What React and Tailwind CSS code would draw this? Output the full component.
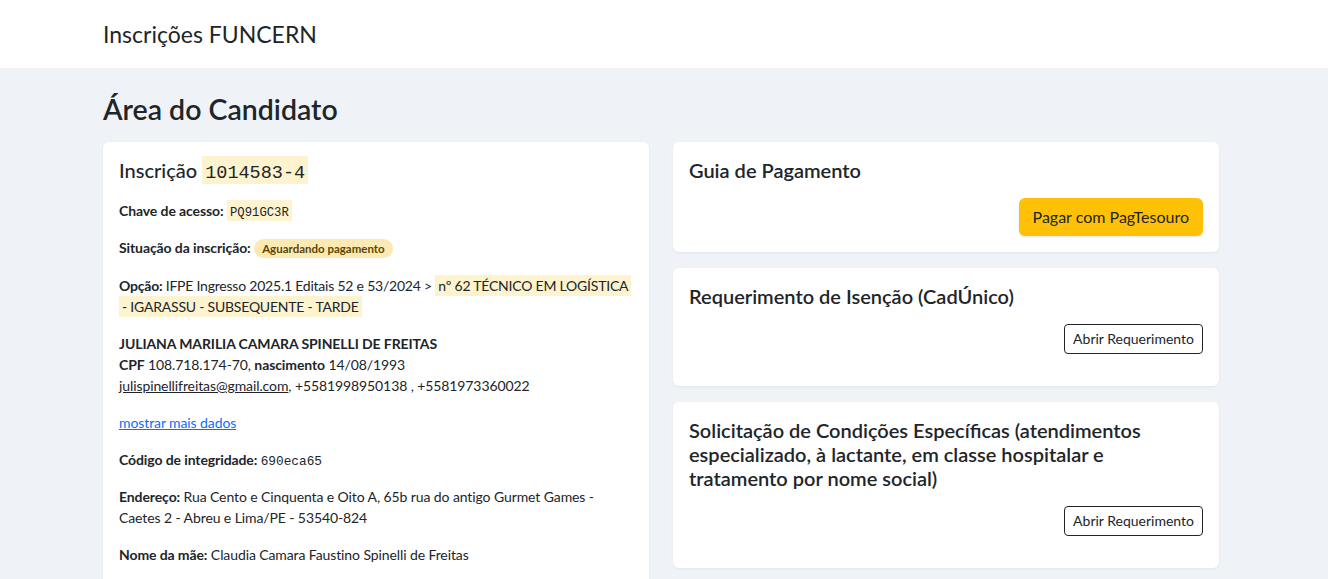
import React from 'react';

const sans = "font-['Lato','Liberation_Sans',sans-serif]";
const mono = "font-['Liberation_Mono',monospace]";

function Mark({ children, className = '' }) {
  return (
    <mark className={`bg-[#fdf3cf] px-[3px] py-[2px] text-[#212529] [box-decoration-break:clone] ${className}`}>
      {children}
    </mark>
  );
}

function Card({ children, className = '' }) {
  return (
    <div className={`rounded-md bg-white p-4 shadow-[0_1px_3px_rgba(0,0,0,0.06)] ${className}`}>
      {children}
    </div>
  );
}

function OutlineButton({ children }) {
  return (
    <button className="rounded border border-[#212529] bg-white px-2 py-1 text-sm leading-[20px] text-[#212529]">
      {children}
    </button>
  );
}

export default function App() {
  return (
    <div className={`${sans} min-h-screen bg-[#eff3f8] text-[#212529]`}>
      <header className="h-[68px] bg-white">
        <div className="ml-[103px] flex h-full items-center">
          <span className="text-[23px] leading-none">Inscrições FUNCERN</span>
        </div>
      </header>

      <main className="ml-[103px] w-[1116px] pt-6">
        <h1 className="mb-4 text-[28.5px] font-semibold leading-[1.2]">Área do Candidato</h1>

        <div className="grid grid-cols-2 gap-6">
          <Card className="text-sm leading-[21px] tracking-[-0.1px]">
            <h2 className="mb-4 text-[20px] font-medium leading-[24px] tracking-normal">
              Inscrição <Mark><code className={`${mono} text-[18.5px] leading-none`}>1014583-4</code></Mark>
            </h2>

            <p className="mb-4">
              <strong>Chave de acesso:</strong>{' '}
              <Mark><code className={`${mono} text-[12.25px] leading-none tracking-normal`}>PQ91GC3R</code></Mark>
            </p>

            <p className="mb-[17px]">
              <strong>Situação da inscrição:</strong>{' '}
              <span className="rounded-full bg-[#fdeab2] px-2 py-[3px] text-[11.5px] font-bold leading-none tracking-normal text-[#5c4503]">
                Aguardando pagamento
              </span>
            </p>

            <p className="mb-4 tracking-[-0.22px]">
              <strong>Opção:</strong> IFPE Ingresso 2025.1 Editais 52 e 53/2024 &gt;{' '}
              <Mark className="py-[1px]">nº 62 TÉCNICO EM LOGÍSTICA - IGARASSU - SUBSEQUENTE - TARDE</Mark>
            </p>

            <p className="mb-4">
              <strong>JULIANA MARILIA CAMARA SPINELLI DE FREITAS</strong>
              <br />
              <strong>CPF</strong> 108.718.174-70, <strong>nascimento</strong> 14/08/1993
              <br />
              <a href="#" className="text-[#212529] underline">julispinellifreitas@gmail.com</a>, +5581998950138 , +5581973360022
            </p>

            <p className="mb-4">
              <a href="#" className="text-[#0d6efd] underline">mostrar mais dados</a>
            </p>

            <p className="mb-4">
              <strong>Código de integridade:</strong>{' '}
              <code className={`${mono} text-[12.75px] leading-none tracking-normal`}>690eca65</code>
            </p>

            <p className="mb-4">
              <strong>Endereço:</strong> Rua Cento e Cinquenta e Oito A, 65b rua do antigo Gurmet Games - Caetes 2 - Abreu e Lima/PE - 53540-824
            </p>

            <p className="mb-4">
              <strong>Nome da mãe:</strong> Claudia Camara Faustino Spinelli de Freitas
            </p>
          </Card>

          <div className="flex flex-col gap-4 self-start">
            <Card>
              <h2 className="mb-4 text-[20px] font-semibold leading-[24px]">Guia de Pagamento</h2>
              <div className="flex justify-end">
                <button className="rounded-md bg-[#ffc107] px-[14px] py-[6px] text-base leading-[26px] text-[#212529] shadow-[0_1px_2px_rgba(0,0,0,0.12)]">
                  Pagar com PagTesouro
                </button>
              </div>
            </Card>

            <Card>
              <h2 className="mb-4 text-[20px] font-semibold leading-[24px]">Requerimento de Isenção (CadÚnico)</h2>
              <div className="mb-4 flex justify-end">
                <OutlineButton>Abrir Requerimento</OutlineButton>
              </div>
            </Card>

            <Card>
              <h2 className="mb-4 text-[20px] font-semibold leading-[24px]">
                Solicitação de Condições Específicas (atendimentos especializado, à lactante, em classe hospitalar e tratamento por nome social)
              </h2>
              <div className="mb-4 flex justify-end">
                <OutlineButton>Abrir Requerimento</OutlineButton>
              </div>
            </Card>
          </div>
        </div>
      </main>
    </div>
  );
}
